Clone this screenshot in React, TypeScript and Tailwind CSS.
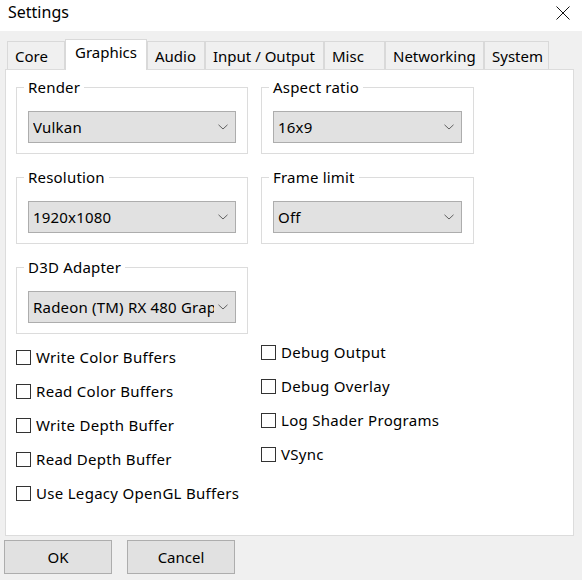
import React from "react";

const font = { fontFamily: '"Noto Sans", "Open Sans", sans-serif' };

function Chevron() {
  return (
    <svg width="10" height="6" viewBox="0 0 10 6" className="shrink-0">
      <polyline points="0.5,0.8 5,5 9.5,0.8" fill="none" stroke="#606060" strokeWidth="1" />
    </svg>
  );
}

function Combo({ value, width }: { value: string; width: string }) {
  return (
    <div className={`${width} h-[32px] bg-[#e1e1e1] border border-[#adadad] flex items-center pl-[4px] pr-[7px] overflow-hidden`}>
      <span className="flex-1 min-w-0 mr-[4px] whitespace-nowrap overflow-hidden text-[15px] leading-[20px] tracking-[0.2px] text-black">{value}</span>
      <Chevron />
    </div>
  );
}

function Group({ label, value, width, combo }: { label: string; value: string; width: string; combo: string }) {
  return (
    <fieldset className={`${width} border border-[#dcdcdc] pl-[11px] pr-[11px] pt-[14px] pb-[10px] min-w-0`}>
      <legend className="ml-[-4px] px-[4px] text-[15px] leading-[20px] tracking-[0.2px] text-black">{label}</legend>
      <Combo value={value} width={combo} />
    </fieldset>
  );
}

function Check({ label }: { label: string }) {
  return (
    <div className="h-[34px] flex items-center gap-[5px]">
      <div className="w-[15px] h-[15px] border border-[#333333] bg-white shrink-0" />
      <span className="text-[15px] leading-[20px] tracking-[0.3px] text-black whitespace-nowrap">{label}</span>
    </div>
  );
}

const tabs = [
  { name: "Core", w: "w-[58px]" },
  { name: "Graphics", w: "w-[82px]", active: true },
  { name: "Audio", w: "w-[58px]" },
  { name: "Input / Output", w: "w-[119px]" },
  { name: "Misc", w: "w-[61px]" },
  { name: "Networking", w: "w-[99px]" },
  { name: "System", w: "w-[65px]" },
];

export default function App() {
  return (
    <div className="w-[582px] h-[580px] bg-[#f0f0f0] flex flex-col overflow-hidden" style={font}>
      <div className="h-[31px] bg-white flex items-start justify-between pl-[8px] pr-[12px] pt-[2px] shrink-0">
        <span className="text-[16px] leading-[20px] text-black">Settings</span>
        <svg width="14" height="14" viewBox="0 0 14 14" className="mt-[4px]">
          <line x1="0.5" y1="0.5" x2="13.5" y2="13.5" stroke="#111" strokeWidth="1" />
          <line x1="13.5" y1="0.5" x2="0.5" y2="13.5" stroke="#111" strokeWidth="1" />
        </svg>
      </div>
      <div className="mt-[8px] pl-[7px] h-[31px] -mb-px flex items-end relative z-10 shrink-0">
        {tabs.map((t) =>
          t.active ? (
            <div key={t.name} className={`${t.w} h-[31px] bg-white border border-b-0 border-[#d9d9d9] pl-[9px] pt-[2px] text-[15px] leading-[20px] text-black`}>
              {t.name}
            </div>
          ) : (
            <div key={t.name} className={`${t.w} h-[28px] mb-[1px] bg-[#f0f0f0] border border-b-0 border-[#d9d9d9] pl-[7px] pt-[4px] text-[15px] leading-[20px] text-black`}>
              {t.name}
            </div>
          )
        )}
      </div>
      <div className="ml-[5px] w-[569px] h-[467px] bg-white border border-[#dcdcdc] pt-[7px] pl-[10px] shrink-0">
        <div className="grid grid-cols-[232px_213px] gap-x-[13px] gap-y-[13px]">
          <Group label="Render" value="Vulkan" width="w-[232px]" combo="w-[208px]" />
          <Group label="Aspect ratio" value="16x9" width="w-[213px]" combo="w-[189px]" />
          <Group label="Resolution" value="1920x1080" width="w-[232px]" combo="w-[208px]" />
          <Group label="Frame limit" value="Off" width="w-[213px]" combo="w-[189px]" />
          <Group label="D3D Adapter" value="Radeon (TM) RX 480 Graphics" width="w-[232px]" combo="w-[208px]" />
        </div>
        <div className="flex">
          <div className="w-[245px] pt-[6px] flex flex-col">
            <Check label="Write Color Buffers" />
            <Check label="Read Color Buffers" />
            <Check label="Write Depth Buffer" />
            <Check label="Read Depth Buffer" />
            <Check label="Use Legacy OpenGL Buffers" />
          </div>
          <div className="pt-[1px] flex flex-col">
            <Check label="Debug Output" />
            <Check label="Debug Overlay" />
            <Check label="Log Shader Programs" />
            <Check label="VSync" />
          </div>
        </div>
      </div>
      <div className="mt-[4px] pl-[4px] flex gap-[15px] shrink-0">
        <button className="w-[108px] h-[34px] bg-[#e1e1e1] border border-[#adadad] text-[15px] leading-[20px] text-black">OK</button>
        <button className="w-[108px] h-[34px] bg-[#e1e1e1] border border-[#adadad] text-[15px] leading-[20px] text-black">Cancel</button>
      </div>
    </div>
  );
}
